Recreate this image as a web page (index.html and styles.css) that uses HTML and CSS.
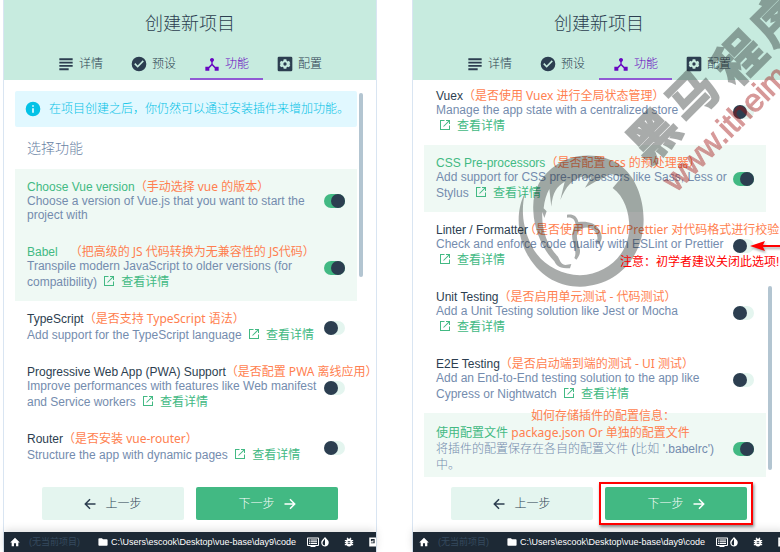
FILE: index.html
```html
<!DOCTYPE html>
<html lang="zh-CN">
<head>
<meta charset="utf-8">
<title>创建新项目</title>
<link rel="stylesheet" href="styles.css">
</head>
<body>
<svg class="symbols" aria-hidden="true">
  <symbol id="i-subject" viewBox="0 0 24 24"><path d="M2 3.500h20v2.700H2zM2 8.500h20v2.700H2zM2 13.500h20v2.700H2zM2 18.500h14v2.700H2z"/></symbol>
  <symbol id="i-check" viewBox="0 0 24 24"><path d="M12 1a11 11 0 1 0 0 22 11 11 0 0 0 0-22zm-2 16.500L4.800 12.300l1.700-1.700 3.500 3.500 7.600-7.600 1.700 1.700z"/></symbol>
  <symbol id="i-hub" viewBox="0 0 24 24"><path d="M17 16l-4-4V8.820A3 3 0 1 0 11 8.820V12l-4 4H2v6h6v-3.500l4-4.200 4 4.200V22h6v-6z"/></symbol>
  <symbol id="i-gear" viewBox="0 0 24 24"><path fill-rule="evenodd" d="M3 1h18a2 2 0 0 1 2 2v18a2 2 0 0 1-2 2H3a2 2 0 0 1-2-2V3a2 2 0 0 1 2-2zm7 4-.4 2.300-1.400.8L6 7.300 4 10.700l1.800 1.300L4 13.400l2 3.400 2.200-.8 1.400.8L10 19h4l.4-2.200 1.400-.8 2.200.8 2-3.400L18.200 12l1.800-1.300-2-3.400-2.200.8-1.400-.8L14 5zm2 4.500a2.500 2.500 0 1 1 0 5 2.500 2.500 0 0 1 0-5z"/></symbol>
  <symbol id="i-info" viewBox="0 0 24 24"><path d="M12 1a11 11 0 1 0 0 22 11 11 0 0 0 0-22zm1.300 16.500h-2.600V11h2.600zm0-8.700h-2.600V6.200h2.600z"/></symbol>
  <symbol id="i-open" viewBox="0 0 24 24"><path d="M20 20H4V4h7V2H2v20h20v-9h-2zM14 2v2h4.600L8.300 14.300l1.400 1.400L20 5.400V10h2V2z"/></symbol>
  <symbol id="i-back" viewBox="0 0 24 24"><path d="M23 10.500H6.200l6.900-6.900L11 1.500.5 12 11 22.500l2.100-2.100-6.900-6.900H23z"/></symbol>
  <symbol id="i-next" viewBox="0 0 24 24"><path d="M1 10.500h16.800l-6.900-6.900L13 1.500 23.500 12 13 22.500l-2.100-2.100 6.900-6.900H1z"/></symbol>
  <symbol id="i-home" viewBox="0 0 24 24"><path d="M9.500 22v-7h5v7H20v-9h3.500L12 2 .5 13H4v9z"/></symbol>
  <symbol id="i-folder" viewBox="0 0 24 24"><path d="M9.500 3H3C1.700 3 1 4 1 5v14c0 1 .7 2 2 2h18c1.300 0 2-1 2-2V7.500c0-1-.7-2-2-2h-9z"/></symbol>
  <symbol id="i-log" viewBox="0 0 24 24"><path fill-rule="evenodd" d="M2 3h20c1 0 2 .8 2 2v13c0 1-1 2-2 2h-5v2H7v-2H2c-1 0-2-1-2-2V5c0-1.200 1-2 2-2zm0 2v13h20V5zm2 2h3v2H4zm4 0h12v2H8zm-4 3.500h3v2H4zm4 0h12v2H8zM4 14h3v2H4zm4 0h12v2H8z"/></symbol>
  <symbol id="i-drop" viewBox="0 0 24 24"><path fill-rule="evenodd" d="M12 0l7 8c4 5 2 14-7 15C3 22 1 13 5 8zm0 4v16c-6-.5-7-6-4.500-10z"/></symbol>
  <symbol id="i-bug" viewBox="0 0 24 24"><path fill-rule="evenodd" d="M22 7h-4l-2-2 2-2-2-2-3 3h-2L8 1 6 3l2 2-2 2H2v3h3v2H2v3h3v2H2v3h4c3 4 9 4 12 0h4v-3h-3v-2h3v-3h-3v-2h3zM9 10h6v2H9zm0 4h6v2H9z"/></symbol>
  <symbol id="i-doc" viewBox="0 0 24 24"><path fill-rule="evenodd" d="M3 1h18v22H3zm4 4v5h4V8h2v7h3V5zm0 8v2h6v-2z"/></symbol>
</svg>

<main class="screens">
  <section class="panel">
    <header class="head">
      <h1>创建新项目</h1>
      <nav class="tabs">
        <button class="tab"><svg><use href="#i-subject"/></svg>详情</button>
        <button class="tab"><svg><use href="#i-check"/></svg>预设</button>
        <button class="tab active"><svg><use href="#i-hub"/></svg>功能</button>
        <button class="tab"><svg><use href="#i-gear"/></svg>配置</button>
      </nav>
    </header>
    <div class="body">
      <p class="banner"><svg><use href="#i-info"/></svg>在项目创建之后，你仍然可以通过安装插件来增加功能。</p>
      <h2>选择功能</h2>
      <div class="item on plain">
        <div class="text">
          <label class="name" for="f-vue">Choose Vue version<span class="note">（手动选择 vue 的版本）</span></label>
          <p>Choose a version of Vue.js that you want to start the project with</p>
        </div>
        <input class="switch" type="checkbox" id="f-vue" checked>
      </div>
      <div class="item on">
        <div class="text">
          <label class="name" for="f-babel">Babel<span class="note spaced">（把高级的 JS 代码转换为无兼容性的 JS代码）</span></label>
          <p>Transpile modern JavaScript to older versions (for compatibility) <a href="#"><svg><use href="#i-open"/></svg>查看详情</a></p>
        </div>
        <input class="switch" type="checkbox" id="f-babel" checked>
      </div>
      <div class="item">
        <div class="text">
          <label class="name" for="f-ts">TypeScript<span class="note">（是否支持 TypeScript 语法）</span></label>
          <p>Add support for the TypeScript language <a href="#"><svg><use href="#i-open"/></svg>查看详情</a></p>
        </div>
        <input class="switch" type="checkbox" id="f-ts">
      </div>
      <div class="item">
        <div class="text">
          <label class="name" for="f-pwa">Progressive Web App (PWA) Support<span class="note">（是否配置 PWA 离线应用）</span></label>
          <p>Improve performances with features like Web manifest and Service workers <a href="#"><svg><use href="#i-open"/></svg>查看详情</a></p>
        </div>
        <input class="switch" type="checkbox" id="f-pwa">
      </div>
      <div class="item">
        <div class="text">
          <label class="name" for="f-router">Router<span class="note">（是否安装 vue-router）</span></label>
          <p>Structure the app with dynamic pages <a href="#"><svg><use href="#i-open"/></svg>查看详情</a></p>
        </div>
        <input class="switch" type="checkbox" id="f-router">
      </div>
      <div class="thumb top"></div>
    </div>
    <div class="actions">
      <button class="btn"><svg><use href="#i-back"/></svg>上一步</button>
      <button class="btn primary">下一步<svg><use href="#i-next"/></svg></button>
    </div>
    <footer class="status">
      <svg><use href="#i-home"/></svg><span class="none">(无当前项目)</span>
      <svg class="folder"><use href="#i-folder"/></svg><span class="path">C:\Users\escook\Desktop\vue-base\day9\code</span>
      <svg class="log"><use href="#i-log"/></svg><svg><use href="#i-drop"/></svg><svg class="bug"><use href="#i-bug"/></svg><svg class="doc"><use href="#i-doc"/></svg>
    </footer>
  </section>

  <section class="panel">
    <header class="head">
      <h1>创建新项目</h1>
      <nav class="tabs">
        <button class="tab"><svg><use href="#i-subject"/></svg>详情</button>
        <button class="tab"><svg><use href="#i-check"/></svg>预设</button>
        <button class="tab active"><svg><use href="#i-hub"/></svg>功能</button>
        <button class="tab"><svg><use href="#i-gear"/></svg>配置</button>
      </nav>
    </header>
    <div class="body scrolled">
      <div class="item">
        <div class="text">
          <label class="name" for="f-vuex">Vuex<span class="note">（是否使用 Vuex 进行全局状态管理）</span></label>
          <p>Manage the app state with a centralized store<br><a href="#"><svg><use href="#i-open"/></svg>查看详情</a></p>
        </div>
        <input class="switch" type="checkbox" id="f-vuex">
      </div>
      <div class="item on">
        <div class="text">
          <label class="name" for="f-css">CSS Pre-processors<span class="note">（是否配置 css 的预处理器）</span></label>
          <p>Add support for CSS pre-processors like Sass, Less or Stylus <a href="#"><svg><use href="#i-open"/></svg>查看详情</a></p>
        </div>
        <input class="switch" type="checkbox" id="f-css" checked>
      </div>
      <div class="item">
        <div class="text">
          <label class="name" for="f-lint">Linter / Formatter<span class="note tight">（是否使用 ESLint/Prettier 对代码格式进行校验</span></label>
          <p>Check and enforce code quality with ESLint or Prettier<br><a href="#"><svg><use href="#i-open"/></svg>查看详情</a></p>
        </div>
        <input class="switch" type="checkbox" id="f-lint">
        <svg class="arrow" viewBox="0 0 40 12"><path d="M0 6 15 1l-2 4h27v2H13l2 4z"/></svg>
        <span class="warning">注意：初学者建议关闭此选项!</span>
      </div>
      <div class="item">
        <div class="text">
          <label class="name" for="f-unit">Unit Testing<span class="note">（是否启用单元测试 - 代码测试）</span></label>
          <p>Add a Unit Testing solution like Jest or Mocha<br><a href="#"><svg><use href="#i-open"/></svg>查看详情</a></p>
        </div>
        <input class="switch" type="checkbox" id="f-unit">
      </div>
      <div class="item">
        <div class="text">
          <label class="name" for="f-e2e">E2E Testing<span class="note">（是否启动端到端的测试 - UI 测试）</span></label>
          <p>Add an End-to-End testing solution to the app like Cypress or Nightwatch <a href="#"><svg><use href="#i-open"/></svg>查看详情</a></p>
        </div>
        <input class="switch" type="checkbox" id="f-e2e">
      </div>
      <div class="item on cjk">
        <div class="text">
          <label class="name" for="f-conf">使用配置文件 <span class="note">package.json Or 单独的配置文件</span></label>
          <p>将插件的配置保存在各自的配置文件 (比如 '.babelrc') 中。</p>
        </div>
        <input class="switch" type="checkbox" id="f-conf" checked>
        <span class="note question">如何存储插件的配置信息：</span>
      </div>
      <div class="thumb bottom"></div>
    </div>
    <div class="actions">
      <button class="btn"><svg><use href="#i-back"/></svg>上一步</button>
      <button class="btn primary marked">下一步<svg><use href="#i-next"/></svg></button>
    </div>
    <footer class="status">
      <svg><use href="#i-home"/></svg><span class="none">(无当前项目)</span>
      <svg class="folder"><use href="#i-folder"/></svg><span class="path">C:\Users\escook\Desktop\vue-base\day9\code</span>
      <svg class="log"><use href="#i-log"/></svg><svg><use href="#i-drop"/></svg><svg class="bug"><use href="#i-bug"/></svg><svg class="doc"><use href="#i-doc"/></svg>
    </footer>
    <svg class="watermark" viewBox="512 0 274 290" aria-hidden="true">
      <g class="mark" transform="translate(510 148) scale(.3333)">
        <path d="M45 135C15 190 22 270 55 325 95 392 155 417 212 416 310 413 385 345 399 245 409 170 380 85 330 52 270 10 190 17 140 50 90 83 66 130 70 190 72 245 98 305 133 340 140 356 150 361 180 361L184 348 166 351C150 348 151 337 143 325 112 294 94 245 97 192L103 210 110 190 101 181C103 158 109 140 118 123L124 176C128 133 140 116 164 101L151 156C169 113 185 94 224 83L216 93 244 88 225 119 258 100C276 92 285 88 300 77L336 87 308 120C344 146 359 195 358 245 351 325 290 378 210 382 145 379 87 345 61 285 36 232 34 178 45 135Z"/>
        <path d="M171 200C188 197 202 204 205 222 232 219 253 224 266 242 276 258 280 270 267 289L258 286C268 267 260 251 245 242 228 234 216 239 203 253 196 270 207 290 210 307 211 319 205 328 199 335L193 330C201 313 192 300 189 280 183 261 188 245 197 230 194 212 185 207 171 209Z"/>
      </g>
      <g class="mark brand">
        <text transform="translate(652 134) rotate(-45)" y="20">黑</text>
        <text transform="translate(691 94) rotate(-45)" y="20">马</text>
        <text transform="translate(738 57) rotate(-45)" y="20">程</text>
        <text transform="translate(776 17) rotate(-45)" y="20">序</text>
      </g>
      <text class="site" transform="translate(676 193) rotate(-45)">www.itheima.com</text>
    </svg>
  </section>
</main>
</body>
</html>
```

FILE: styles.css
```css
* { box-sizing: border-box; }

body {
  margin: 0;
  overflow: hidden;
  background: #fff;
  color: #2c3e50;
  font: 12px/14px "Liberation Sans", "Noto Sans CJK SC", sans-serif;
}

h1, h2, p { margin: 0; font-weight: 300; }
button { border: 0; background: none; font: inherit; font-weight: 300; color: inherit; }
svg { fill: currentColor; flex: none; }
.symbols { position: absolute; width: 0; height: 0; }

.screens {
  display: grid;
  grid-template-columns: 1fr 1fr;
  gap: 35px;
  min-height: 100vh;
  margin: 0 -6px 0 3px;
}

.panel {
  position: relative;
  display: flex;
  flex-direction: column;
  min-width: 0;
  border: solid #d9e5f2;
  border-width: 0 1px;
}

.head { background: #c7ebdf; }
.head h1 {
  font-size: 18px;
  line-height: 48px;
  text-align: center;
}
.tabs { display: flex; justify-content: center; }
.tab {
  display: flex;
  align-items: center;
  justify-content: center;
  gap: 5px;
  width: 73px;
  height: 32px;
  padding: 2px 0 0;
  border-bottom: 2px solid transparent;
}
.tab svg { width: 16px; height: 16px; }
.tab.active { color: #6806c1; border-color: #9059d4; }

.body {
  position: relative;
  flex: 1;
  padding: 11px 19px 0 11px;
}
.body.scrolled { padding-top: 0; }
.scrolled .item:first-child { margin-top: -2px; }

.banner {
  display: flex;
  align-items: center;
  gap: 8px;
  height: 36px;
  padding-left: 10px;
  border-radius: 2px;
  background: #e1f8ff;
  color: #03c2e6;
  white-space: nowrap;
}
.banner svg { width: 16px; height: 16px; }

h2 {
  padding-left: 12px;
  font-size: 14px;
  line-height: 42px;
  color: #6b83a5;
}

.item {
  position: relative;
  display: flex;
  align-items: center;
  gap: 2px;
  padding: 11px 12px 10px;
}
.item.plain { padding-bottom: 12px; }
.item.on { background: #eff9f4; }
.text { flex: 1; min-width: 0; }
.text p { color: #748cae; font-weight: 400; }
.name { display: block; white-space: nowrap; }
.on .name { color: #42b983; }
.item a {
  display: inline-block;
  padding: 0 3px;
  line-height: 18px;
  color: #42b983;
  text-decoration: none;
}
.item a svg {
  width: 12px;
  height: 12px;
  margin-right: 6px;
  vertical-align: -1px;
}

.item.cjk { padding: 12px 12px 4px; }
.cjk .text { line-height: 16px; }
.cjk p { font-weight: 300; }

.note {
  color: #ff7f50;
  font-family: "Noto Sans", "Noto Sans CJK SC", sans-serif;
}
.note.spaced { margin-left: 12px; }
.note.tight { margin-left: -4px; }
.note.question {
  position: absolute;
  top: -4px;
  left: 107px;
}

.switch {
  appearance: none;
  flex: none;
  width: 21px;
  height: 14px;
  margin: 0;
  border-radius: 7px;
  background: #e4f5ef;
}
.switch::before {
  content: "";
  display: block;
  width: 14px;
  height: 14px;
  border-radius: 50%;
  background: #2c3e50;
}
.switch:checked { background: #42b983; }
.switch:checked::before { margin-left: auto; }

.arrow {
  position: absolute;
  top: 28px;
  right: -24px;
  width: 40px;
  height: 12px;
  color: #f00;
  filter: drop-shadow(1px 2px 1px #0005);
}
.warning {
  position: absolute;
  top: 43px;
  left: 196px;
  z-index: 2;
  color: #f00;
  white-space: nowrap;
}

.thumb {
  position: absolute;
  right: 13px;
  width: 4px;
  height: 184px;
  border-radius: 2px;
  background: #b3c5d1;
}
.thumb.top { top: 13px; }
.thumb.bottom { bottom: 7px; }

.actions {
  display: flex;
  justify-content: center;
  gap: 12px;
  padding: 10px 38px 12px;
}
.btn {
  position: relative;
  display: flex;
  flex: 1;
  align-items: center;
  justify-content: center;
  gap: 9px;
  height: 33px;
  border-radius: 2px;
  background: #e4f5ef;
}
.btn svg { width: 12px; height: 12px; }
.btn.primary { background: #42b983; color: #fff; }
.btn.marked::after {
  content: "";
  position: absolute;
  inset: -5px -6px;
  border: 2px solid #f00;
  box-shadow: 1px 2px 3px #0007;
}

.status {
  display: flex;
  align-items: center;
  height: 20px;
  padding-left: 6px;
  overflow: hidden;
  background: #1d2935;
  color: #fff;
  box-shadow: 0 -2px 8px #0002;
  font-size: 10px;
  white-space: nowrap;
}
.status svg { width: 10px; height: 10px; }
.none { margin-left: 9px; color: #35495e; font-size: 9px; }
.path { font-size: 9px; }
.status .folder { margin: 0 3px 0 18px; }
.status .log { width: 12px; height: 12px; margin: 0 1px 0 11px; }
.status .bug { margin: 0 14px; }

.watermark {
  position: absolute;
  top: 0;
  left: 99px;
  width: 274px;
  height: 290px;
  overflow: hidden;
  pointer-events: none;
}
.mark { fill: #1e2423; opacity: .38; }
.brand {
  stroke: #1e2423;
  stroke-width: 2px;
  font: 700 49px "Noto Sans CJK SC", sans-serif;
  text-anchor: middle;
}
.site {
  fill: #a00c0c;
  stroke: #a00c0c;
  opacity: .42;
  font-size: 32px;
}
```
